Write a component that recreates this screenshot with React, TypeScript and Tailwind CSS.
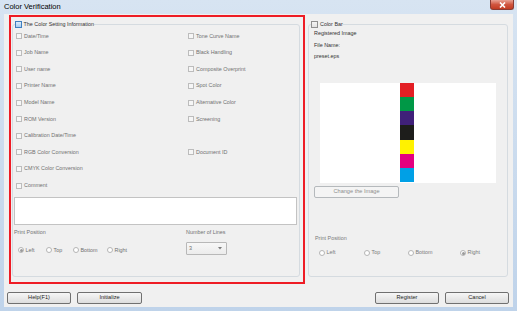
import React from "react";

const leftItems = [
  "Date/Time",
  "Job Name",
  "User name",
  "Printer Name",
  "Model Name",
  "ROM Version",
  "Calibration Date/Time",
  "RGB Color Conversion",
  "CMYK Color Conversion",
  "Comment",
];

const rightItems = [
  "Tone Curve Name",
  "Black Handling",
  "Composite Overprint",
  "Spot Color",
  "Alternative Color",
  "Screening",
  "",
  "Document ID",
  "",
  "",
];

const stripes = ["bg-[#e31e24]", "bg-[#009846]", "bg-[#3f2079]", "bg-[#1d1d1b]", "bg-[#fff200]", "bg-[#e4007f]", "bg-[#00a0e6]"];

const Box = () => <span className="w-[6px] h-[6px] shrink-0 border border-[#bcbcbc] bg-[#f6f6f6]" />;

const Radio = ({ on }: { on?: boolean }) => (
  <span className="w-[6px] h-[6px] shrink-0 rounded-full border border-[#b5b5b5] bg-white flex items-center justify-center">
    {on && <span className="w-[3px] h-[3px] rounded-full bg-[#9a9a9a]" />}
  </span>
);

const Check = ({ label }: { label: string }) => (
  <div className="h-[16.6px] flex items-center gap-[2px]">
    {label && (
      <>
        <Box />
        <span>{label}</span>
      </>
    )}
  </div>
);

const Button = ({ label, w, className = "" }: { label: string; w: string; className?: string }) => (
  <div
    className={`${w} h-[12px] rounded-[2px] border border-[#707070] bg-linear-to-b from-[#f6f6f6] to-[#dddddd] flex items-center justify-center text-[5.6px] text-[#1e1e1e] ${className}`}
  >
    {label}
  </div>
);

const RadioRow = ({ items, widths, checked }: { items: string[]; widths: string[]; checked: number }) => (
  <div className="flex h-[7px] items-center">
    {items.map((t, i) => (
      <div key={t} className={`${widths[i]} flex items-center gap-[1.5px]`}>
        <Radio on={i === checked} />
        <span>{t}</span>
      </div>
    ))}
  </div>
);

export default function App() {
  return (
    <div className="w-[517px] h-[311px] bg-linear-to-b from-[#d7e4f2] to-[#bfd3ea] flex flex-col font-['Liberation_Sans',Arial,sans-serif] text-[5.4px] leading-none overflow-hidden">
      {/* title bar */}
      <div className="h-[14px] flex justify-between shrink-0">
        <span className="pl-[4px] pt-[3px] text-[7.5px] text-black">Color Verification</span>
        <div className="mr-[3px] w-[24px] h-[10px] rounded-b-[3px] border border-t-0 border-[#8a3b33] bg-linear-to-b from-[#e8a194] via-[#d0553f] to-[#c23b22] flex items-center justify-center">
          <svg width="7" height="6" viewBox="0 0 7 6">
            <path d="M1 0.5 L6 5.5 M6 0.5 L1 5.5" stroke="white" strokeWidth="1.6" />
          </svg>
        </div>
      </div>

      {/* client area */}
      <div className="mx-[4px] h-[293px] bg-[#f0f0f0] pt-[1px] flex flex-col">
        <div className="flex items-start">
          {/* highlighted left group */}
          <div className="ml-[5px] w-[296px] h-[269px] border-2 border-[#ee1c25] pl-[1px] pt-[4px]">
            <fieldset className="w-[288px] h-[256px] border border-[#d5dbe0] rounded-[3px] text-[#707070]">
              <legend className="ml-[2px] h-[7px] flex items-center gap-[1.5px] text-[#333]">
                <span className="w-[7px] h-[7px] border border-[#3f7fbf] bg-linear-to-b from-[#dcecfb] to-[#a6cdef]" />
                <span>The Color Setting Information</span>
              </legend>
              <div className="grid grid-cols-[172px_1fr] pl-[3px]">
                {leftItems.map((l, i) => (
                  <React.Fragment key={l}>
                    <Check label={l} />
                    <Check label={rightItems[i]} />
                  </React.Fragment>
                ))}
              </div>
              <div className="mt-[3px] ml-[1px] w-[283px] h-[28px] border border-[#c3c3c3] bg-white" />
              <div className="flex mt-[4px]">
                <div className="w-[173px]">
                  <div className="pl-[1px] h-[7px] flex items-center">Print Position</div>
                  <div className="mt-[11px] pl-[5px]">
                    <RadioRow
                      items={["Left", "Top", "Bottom", "Right"]}
                      widths={["w-[28px]", "w-[27px]", "w-[34px]", "w-[30px]"]}
                      checked={0}
                    />
                  </div>
                </div>
                <div>
                  <div className="h-[7px] flex items-center">Number of Lines</div>
                  <div className="mt-[6px] w-[41px] h-[13px] border border-[#b8b8b8] rounded-[1px] bg-linear-to-b from-[#f7f7f7] to-[#ececec] flex items-center justify-between pl-[2px] pr-[4px]">
                    <span>3</span>
                    <svg width="4" height="3" viewBox="0 0 4 3">
                      <path d="M0 0 H4 L2 2.5 Z" fill="#7a7a7a" />
                    </svg>
                  </div>
                </div>
              </div>
            </fieldset>
          </div>

          {/* right group */}
          <fieldset className="ml-[3px] mt-[6px] w-[200px] h-[256px] border border-[#d5dbe0] rounded-[3px] text-[#333]">
            <legend className="ml-[2px] h-[7px] flex items-center gap-[2px]">
              <span className="w-[7px] h-[7px] border border-[#8f8f8f] bg-linear-to-b from-[#f4f4f4] to-[#e2e2e2]" />
              <span>Color Bar</span>
            </legend>
            <div className="pl-[5px] leading-[11.5px]">
              <div>Registered Image</div>
              <div>File Name:</div>
              <div>preset.eps</div>
            </div>
            <div className="mt-[20px] ml-[11px] w-[176px] h-[100px] bg-white pl-[80px]">
              <div className="w-[14px] h-full flex flex-col">
                {stripes.map((s) => (
                  <div key={s} className={`flex-1 ${s}`} />
                ))}
              </div>
            </div>
            <div className="mt-[3px] ml-[5px] w-[85px] h-[12px] rounded-[2px] border border-[#b5b9bc] bg-[#f4f4f4] flex items-center justify-center text-[5.6px] text-[#8d8d8d]">
              Change the Image
            </div>
            <div className="mt-[38px] ml-[6px] h-[7px] flex items-center text-[#7a7a7a]">Print Position</div>
            <div className="mt-[7px] ml-[10px] text-[#7a7a7a]">
              <RadioRow
                items={["Left", "Top", "Bottom", "Right"]}
                widths={["w-[45px]", "w-[44px]", "w-[52px]", "w-[30px]"]}
                checked={3}
              />
            </div>
          </fieldset>
        </div>

        {/* bottom buttons */}
        <div className="mt-[8px] flex pl-[3px] pr-[4px]">
          <Button label="Help(F1)" w="w-[64px]" />
          <Button label="Initialize" w="w-[65px]" className="ml-[6px]" />
          <div className="flex-1" />
          <Button label="Register" w="w-[64px]" />
          <Button label="Cancel" w="w-[64px]" className="ml-[6px]" />
        </div>
      </div>
    </div>
  );
}
